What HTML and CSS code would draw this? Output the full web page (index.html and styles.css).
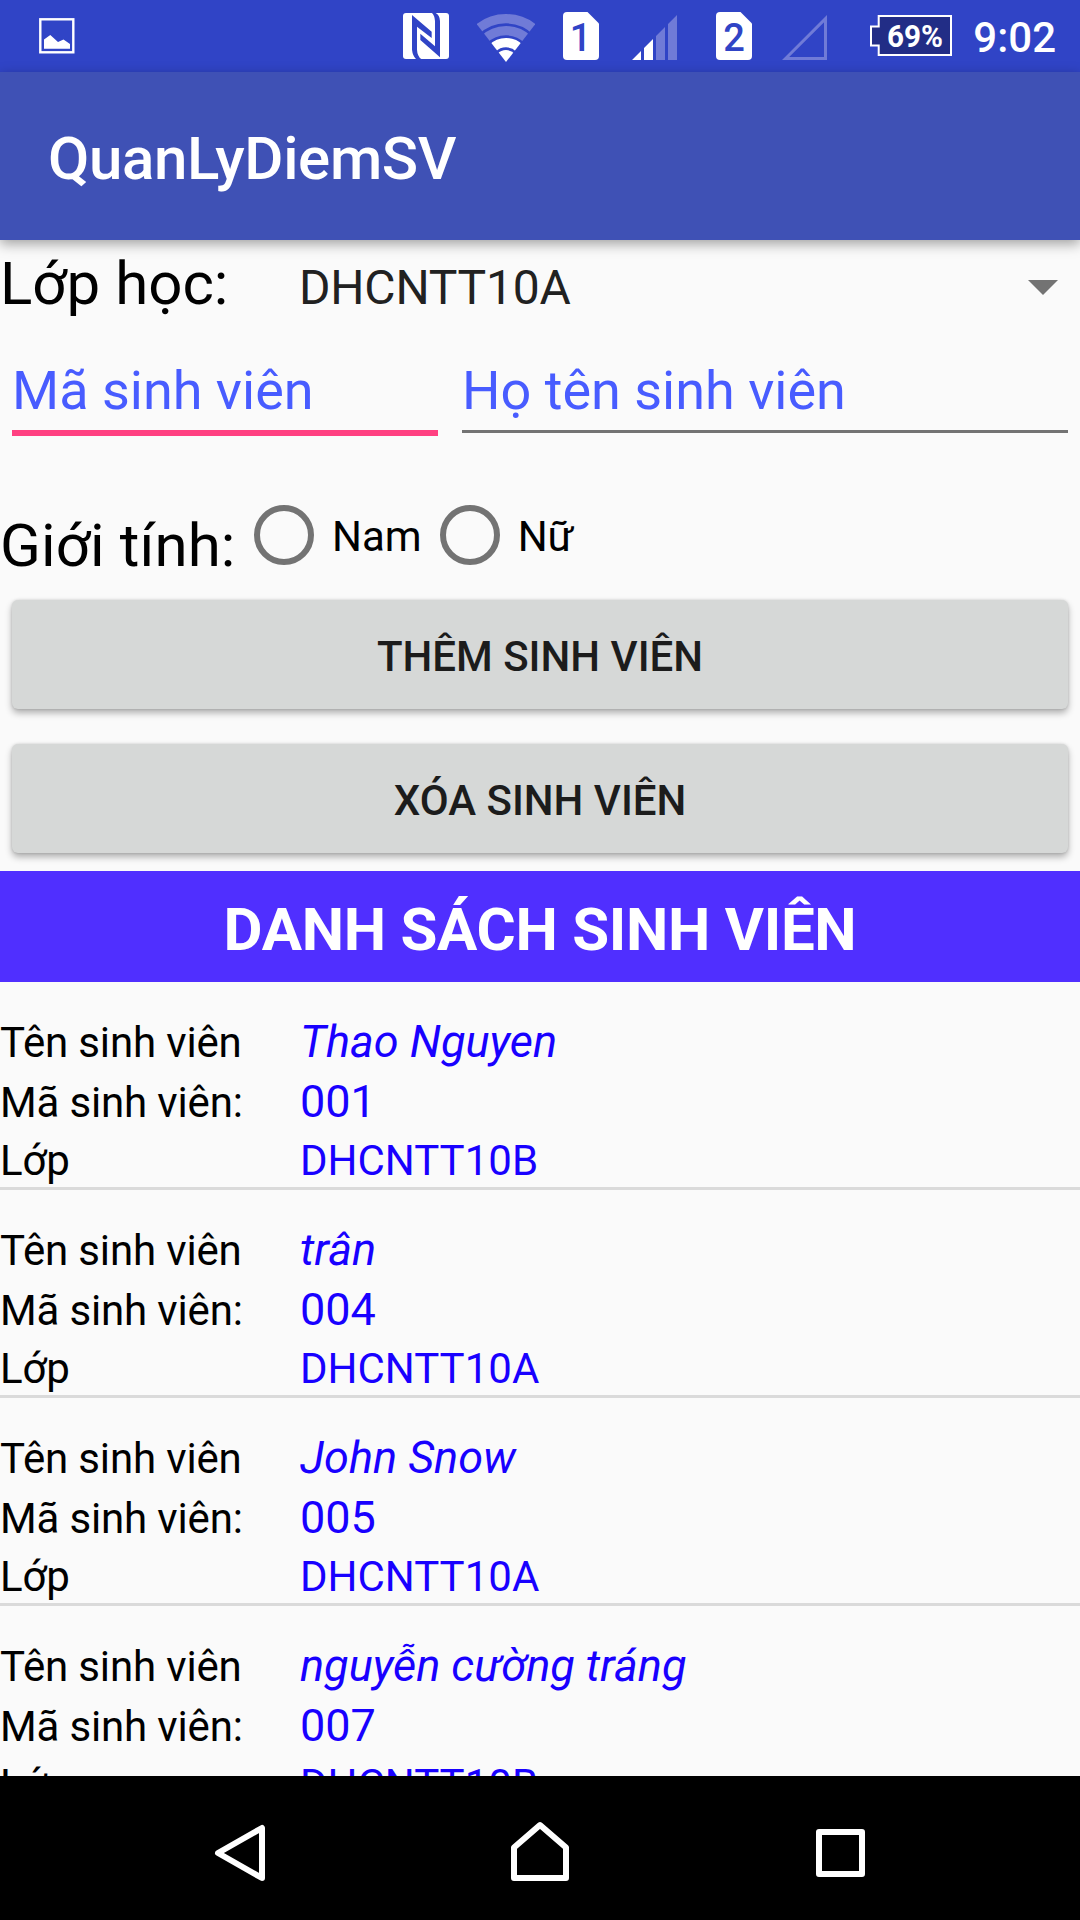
FILE: index.html
```html
<!DOCTYPE html>
<html lang="vi">
<head>
<meta charset="utf-8">
<title>QuanLyDiemSV</title>
<link rel="stylesheet" href="styles.css">
</head>
<body>
<div class="screen">
  <header class="status-bar">
    <svg class="picture-icon" width="36" height="36" viewBox="0 0 36 36"><rect x="1.3" y="1.3" width="33" height="33" fill="none" stroke="#fff" stroke-width="2.4"/><path d="M5 21.5L11.3 17L19 24L24.5 21.5L31 26V30.7H5Z" fill="#fff"/></svg>
    <div class="status-icons">
      <svg class="nfc" width="46" height="46" viewBox="0 0 138 138"><rect width="138" height="138" rx="9" fill="#fff"/><path d="M27 6L86 56V75L42 41V110Q43 130 55 138H39Q29 128 27 110Z M98 0Q110 6 111 24V133L52 81V62L96 100V24Q95 8 87 0Z" fill="#3044c6"/></svg>
      <svg class="wifi" width="58" height="49" viewBox="0 0 58 49"><clipPath id="wedge"><path d="M29 48L0 10.5V0H58V10.5Z"/></clipPath><g clip-path="url(#wedge)" fill="none" stroke-width="9.3"><circle cx="29" cy="48" r="43.3" stroke="#707bd7"/><circle cx="29" cy="48" r="31.3" stroke="#707bd7"/><circle cx="29" cy="48" r="19.3" stroke="#fff"/><circle cx="29" cy="48" r="12" fill="#fff"/></g></svg>
      <svg class="sim-one" width="36" height="48" viewBox="0 0 36 48"><path d="M4 0H24.5L36 11.5V44Q36 48 32 48H4Q0 48 0 44V4Q0 0 4 0Z" fill="#fff"/><text x="17.5" y="39" class="sim-number">1</text></svg>
      <svg class="signal" width="45" height="45" viewBox="0 0 45 45"><path d="M0 45L9 36V45ZM12 33L21 24V45H12Z" fill="#fff"/><path d="M24 21L33 12V45H24ZM36 9L45 0V45H36Z" fill="#707bd7"/></svg>
      <svg class="sim-two" width="36" height="48" viewBox="0 0 36 48"><path d="M4 0H24.5L36 11.5V44Q36 48 32 48H4Q0 48 0 44V4Q0 0 4 0Z" fill="#fff"/><text x="18" y="39" class="sim-number">2</text></svg>
      <svg class="no-signal" width="45" height="45" viewBox="0 0 45 45"><path d="M3.6 43.5L43.5 3.6V43.5Z" fill="none" stroke="#707bd7" stroke-width="3"/></svg>
      <svg class="battery" width="82" height="42" viewBox="0 0 82 42"><path d="M8.7 1H81V40H8.7V30.5H1V11.5H8.7Z" fill="#222d86" stroke="#fff" stroke-width="2"/><text x="17" y="31.5" class="battery-level" textLength="56" lengthAdjust="spacingAndGlyphs">69%</text></svg>
      <span class="clock">9:02</span>
    </div>
  </header>
  <div class="app-bar"><h1 class="app-title">QuanLyDiemSV</h1></div>
  <main class="content">
    <div class="class-row">
      <span class="label class-label">Lớp học:</span>
      <span class="class-value">DHCNTT10A</span>
      <svg class="caret" width="30" height="15" viewBox="0 0 30 15"><path d="M0 0H30L15 15Z" fill="#737373"/></svg>
    </div>
    <div class="input-row">
      <div class="field field-id field-focused">Mã sinh viên</div>
      <div class="field field-name">Họ tên sinh viên</div>
    </div>
    <div class="gender-row">
      <span class="label gender-label">Giới tính:</span>
      <div class="radio"><i class="radio-ring"></i><span>Nam</span></div>
      <div class="radio"><i class="radio-ring"></i><span>Nữ</span></div>
    </div>
    <div class="actions">
      <button class="button">THÊM SINH VIÊN</button>
      <button class="button">XÓA SINH VIÊN</button>
    </div>
    <h2 class="list-title">DANH SÁCH SINH VIÊN</h2>
    <div class="student-list">
      <div class="student">
        <div class="line"><span class="key">Tên sinh viên</span><span class="name">Thao Nguyen</span></div>
        <div class="line"><span class="key">Mã sinh viên:</span><span class="code">001</span></div>
        <div class="line line-class"><span class="key">Lớp</span><span class="group">DHCNTT10B</span></div>
      </div>
      <div class="student">
        <div class="line"><span class="key">Tên sinh viên</span><span class="name">trân</span></div>
        <div class="line"><span class="key">Mã sinh viên:</span><span class="code">004</span></div>
        <div class="line line-class"><span class="key">Lớp</span><span class="group">DHCNTT10A</span></div>
      </div>
      <div class="student">
        <div class="line"><span class="key">Tên sinh viên</span><span class="name">John Snow</span></div>
        <div class="line"><span class="key">Mã sinh viên:</span><span class="code">005</span></div>
        <div class="line line-class"><span class="key">Lớp</span><span class="group">DHCNTT10A</span></div>
      </div>
      <div class="student">
        <div class="line"><span class="key">Tên sinh viên</span><span class="name">nguyễn cường tráng</span></div>
        <div class="line"><span class="key">Mã sinh viên:</span><span class="code">007</span></div>
        <div class="line line-class"><span class="key">Lớp</span><span class="group">DHCNTT10B</span></div>
      </div>
    </div>
  </main>
  <nav class="nav-bar">
    <svg width="60" height="66" viewBox="0 0 60 66"><path d="M8 33L52 8V58Z" fill="none" stroke="#fff" stroke-width="6" stroke-linejoin="round"/></svg>
    <svg width="60" height="66" viewBox="0 0 60 66"><path d="M4 58V27.5L30 5L56 27.5V58Z" fill="none" stroke="#fff" stroke-width="6" stroke-linejoin="round"/></svg>
    <svg width="60" height="66" viewBox="0 0 60 66"><rect x="9" y="12" width="43" height="42" fill="none" stroke="#fff" stroke-width="6" stroke-linejoin="round"/></svg>
  </nav>
</div>
</body>
</html>
```
FILE: styles.css
```css
* { box-sizing: border-box; }
body { margin: 0; background: #fafafa; font-family: Roboto, "Noto Sans", sans-serif; color: #000; }
svg { display: block; flex: none; }
h1, h2 { margin: 0; }
.screen { width: 1080px; height: 1920px; display: flex; flex-direction: column; overflow: hidden; }

.status-bar { flex: none; height: 72px; background: #3044c6; display: flex; justify-content: space-between; padding: 0 24px 0 39px; }
.picture-icon { margin-top: 18px; }
.status-icons { display: flex; align-items: flex-start; }
.nfc { margin: 13px 28px 0 0; }
.wifi { margin: 14px 28px 0 0; }
.sim-one { margin: 12px 33px 0 0; }
.signal { margin: 15px 39px 0 0; }
.sim-two { margin: 12px 30px 0 0; }
.no-signal { margin: 15px 43px 0 0; }
.battery { margin: 15px 21px 0 0; }
.sim-number { font-size: 38px; font-weight: 500; fill: #3044c6; text-anchor: middle; }
.battery-level { font-size: 32px; font-weight: 700; fill: #fff; }
.clock { color: #fff; font-size: 42px; font-weight: 500; line-height: 75px; }

.app-bar { flex: none; height: 168px; background: #3f51b5; padding: 5px 0 0 48px; position: relative; box-shadow: 0 4px 12px rgba(0, 0, 0, .36); }
.app-title { color: #fff; font-size: 60px; font-weight: 500; line-height: 163px; letter-spacing: -.35px; }

.content { flex: 1; min-height: 0; display: flex; flex-direction: column; }
.label { font-size: 60px; line-height: 70px; }
.class-row { flex: none; height: 118px; padding: 9px 22px 0 0; display: flex; align-items: baseline; }
.class-label { width: 299px; }
.class-value { flex: 1; font-size: 48px; color: #212121; letter-spacing: -.2px; }
.caret { align-self: flex-start; margin-top: 31px; }

.input-row { flex: none; height: 78px; padding: 0 12px; display: flex; align-items: flex-start; gap: 24px; }
.field { font-size: 54px; line-height: 64px; padding: 1px 0 7px; color: #485cff; border-bottom: 3px solid #737373; }
.field-id { width: 426px; }
.field-name { flex: 1; }
.field-focused { border-bottom: 6px solid #ff4081; }

.gender-row { flex: none; height: 164px; display: flex; align-items: flex-start; }
.gender-label { width: 236px; padding-top: 75px; letter-spacing: .1px; }
.radio { display: flex; align-items: center; height: 60px; margin-top: 69px; padding-left: 18px; gap: 18px; font-size: 42px; line-height: 56px; }
.radio span { padding-top: 4px; }
.radio-ring { width: 60px; height: 60px; border: 6px solid #737373; border-radius: 50%; }

.actions { flex: none; height: 271px; padding: 0 12px; display: flex; flex-direction: column; gap: 35px; }
.button { height: 109px; border: 0; border-radius: 6px; background: #d6d8d7; color: #1c1c1c; font: 500 42px/109px Roboto, sans-serif; padding: 2px 0 0; box-shadow: 0 4px 7px rgba(0, 0, 0, .3), 0 0 3px rgba(0, 0, 0, .15); }

.list-title { flex: none; height: 111px; background: #502fff; color: #fff; font-size: 60px; line-height: 117px; font-weight: 700; text-align: center; letter-spacing: -.3px; }
.student-list { flex: 1; min-height: 0; overflow: hidden; }
.student { height: 208px; padding-top: 30px; border-bottom: 3px solid #dadada; }
.line { height: 60px; display: flex; align-items: baseline; font-size: 42px; line-height: 60px; }
.line-class { height: 55px; line-height: 57px; }
.key { width: 300px; letter-spacing: -.15px; }
.name, .code { font-size: 45px; color: #1800ff; }
.name { font-style: italic; }
.group { color: #1800ff; }

.nav-bar { flex: none; height: 144px; background: #000; display: flex; justify-content: center; align-items: flex-start; gap: 240px; padding-top: 44px; }
```
